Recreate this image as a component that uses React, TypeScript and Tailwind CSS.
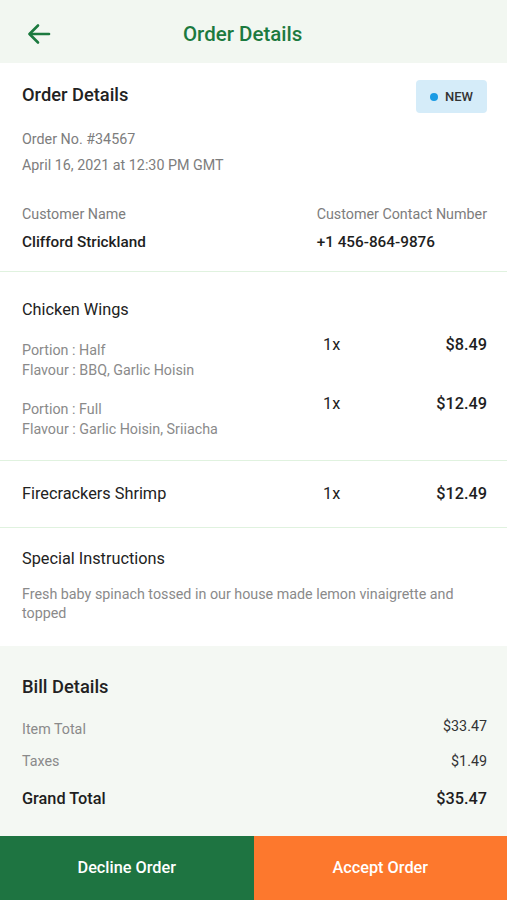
import React from "react";

const font = { fontFamily: "Roboto, 'Noto Sans', sans-serif" };

function Divider() {
  return <div className="h-px bg-[#e0f2df]" />;
}

export default function App() {
  return (
    <div className="w-[507px] h-[900px] bg-white flex flex-col overflow-hidden" style={font}>
      {/* Header */}
      <div className="h-[63px] bg-[#f2f7f1] flex items-center pl-[27px] pt-[5px] shrink-0">
        <svg width="24" height="24" viewBox="0 0 24 24" fill="none" stroke="#1c7a3f" strokeWidth="2.6" strokeLinecap="round" strokeLinejoin="round">
          <path d="M22 12H3" />
          <path d="M11 3.5L2.5 12L11 20.5" />
        </svg>
        <div className="ml-[132px] text-[20.5px] font-medium text-[#1c7a3f] leading-[26px]">Order Details</div>
      </div>

      {/* Order info */}
      <div className="pl-[22px] pr-[20px] pt-[17px] pb-[18px]">
        <div className="flex items-center justify-between h-[33px]">
          <div className="-mt-[3px] text-[18.3px] font-medium text-[#222] leading-[24px]">Order Details</div>
          <div className="h-[33px] w-[71px] rounded-[4px] bg-[#d5ecf9] flex items-center justify-center gap-[7px]">
            <span className="w-[8px] h-[8px] rounded-full bg-[#1a9be4]" />
            <span className="text-[13px] font-medium text-[#333] leading-none">NEW</span>
          </div>
        </div>
        <div className="mt-[13px] text-[14.3px] text-[#7d7d7d] leading-[26px]">Order No. #34567</div>
        <div className="text-[14.3px] text-[#7d7d7d] leading-[26px]">April 16, 2021 at 12:30 PM GMT</div>
        <div className="mt-[26px] flex">
          <div className="w-[295px]">
            <div className="text-[14.3px] text-[#7d7d7d] leading-[20px]">Customer Name</div>
            <div className="mt-[7px] text-[15.3px] font-medium text-[#1e1e1e] leading-[22px]">Clifford Strickland</div>
          </div>
          <div className="flex-1">
            <div className="text-[14.3px] text-[#7d7d7d] leading-[20px] whitespace-nowrap">Customer Contact Number</div>
            <div className="mt-[7px] text-[15.3px] font-medium text-[#1e1e1e] leading-[22px]">+1 456-864-9876</div>
          </div>
        </div>
      </div>
      <Divider />

      {/* Chicken Wings */}
      <div className="pl-[22px] pr-[20px] pt-[27px] pb-[21px]">
        <div className="text-[16.3px] text-[#222] leading-[22px]">Chicken Wings</div>
        {[
          { portion: "Half", flavour: "BBQ, Garlic Hoisin", price: "$8.49" },
          { portion: "Full", flavour: "Garlic Hoisin, Sriiacha", price: "$12.49" },
        ].map((it, i) => (
          <div key={i} className="mt-[19px] flex items-start">
            <div className="w-[301px] text-[14.3px] text-[#8a8a8a] leading-[20px]">
              <div>Portion : {it.portion}</div>
              <div>Flavour : {it.flavour}</div>
            </div>
            <div className="flex-1 flex justify-between -mt-[5px] leading-[20px]">
              <span className="text-[16.3px] text-[#222]">1x</span>
              <span className="text-[16.3px] font-medium text-[#1e1e1e]">{it.price}</span>
            </div>
          </div>
        ))}
      </div>
      <Divider />

      {/* Firecrackers */}
      <div className="pl-[22px] pr-[20px] pt-[22px] pb-[22px] flex items-center">
        <div className="w-[301px] text-[16.3px] text-[#222] leading-[22px]">Firecrackers Shrimp</div>
        <div className="flex-1 flex justify-between leading-[22px]">
          <span className="text-[16.3px] text-[#222]">1x</span>
          <span className="text-[16.3px] font-medium text-[#1e1e1e]">$12.49</span>
        </div>
      </div>
      <Divider />

      {/* Special instructions */}
      <div className="pl-[22px] pr-[20px] pt-[20px] pb-[23px]">
        <div className="text-[16.3px] text-[#222] leading-[22px]">Special Instructions</div>
        <div className="mt-[15px] text-[14.3px] text-[#8a8a8a] leading-[19px]">
          Fresh baby spinach tossed in our house made lemon vinaigrette and topped
        </div>
      </div>

      {/* Bill */}
      <div className="flex-1 bg-[#f4f8f3] pl-[22px] pr-[20px] pt-[29px]">
        <div className="text-[18.3px] font-medium text-[#222] leading-[24px]">Bill Details</div>
        <div className="mt-[20px] flex justify-between items-start leading-[20px]">
          <span className="text-[14.3px] text-[#8a8a8a]">Item Total</span>
          <span className="text-[14.3px] text-[#333] -mt-[3px]">$33.47</span>
        </div>
        <div className="mt-[12px] flex justify-between leading-[20px]">
          <span className="text-[14.3px] text-[#8a8a8a]">Taxes</span>
          <span className="text-[14.3px] text-[#333]">$1.49</span>
        </div>
        <div className="mt-[17px] flex justify-between leading-[22px]">
          <span className="text-[16.3px] font-medium text-[#1e1e1e]">Grand Total</span>
          <span className="text-[16.3px] font-medium text-[#1e1e1e]">$35.47</span>
        </div>
      </div>

      {/* Buttons */}
      <div className="h-[64px] flex shrink-0">
        <button className="flex-1 bg-[#1e7441] text-white text-[16.3px] font-medium">Decline Order</button>
        <button className="flex-1 bg-[#fd782d] text-white text-[16.3px] font-medium">Accept Order</button>
      </div>
    </div>
  );
}
